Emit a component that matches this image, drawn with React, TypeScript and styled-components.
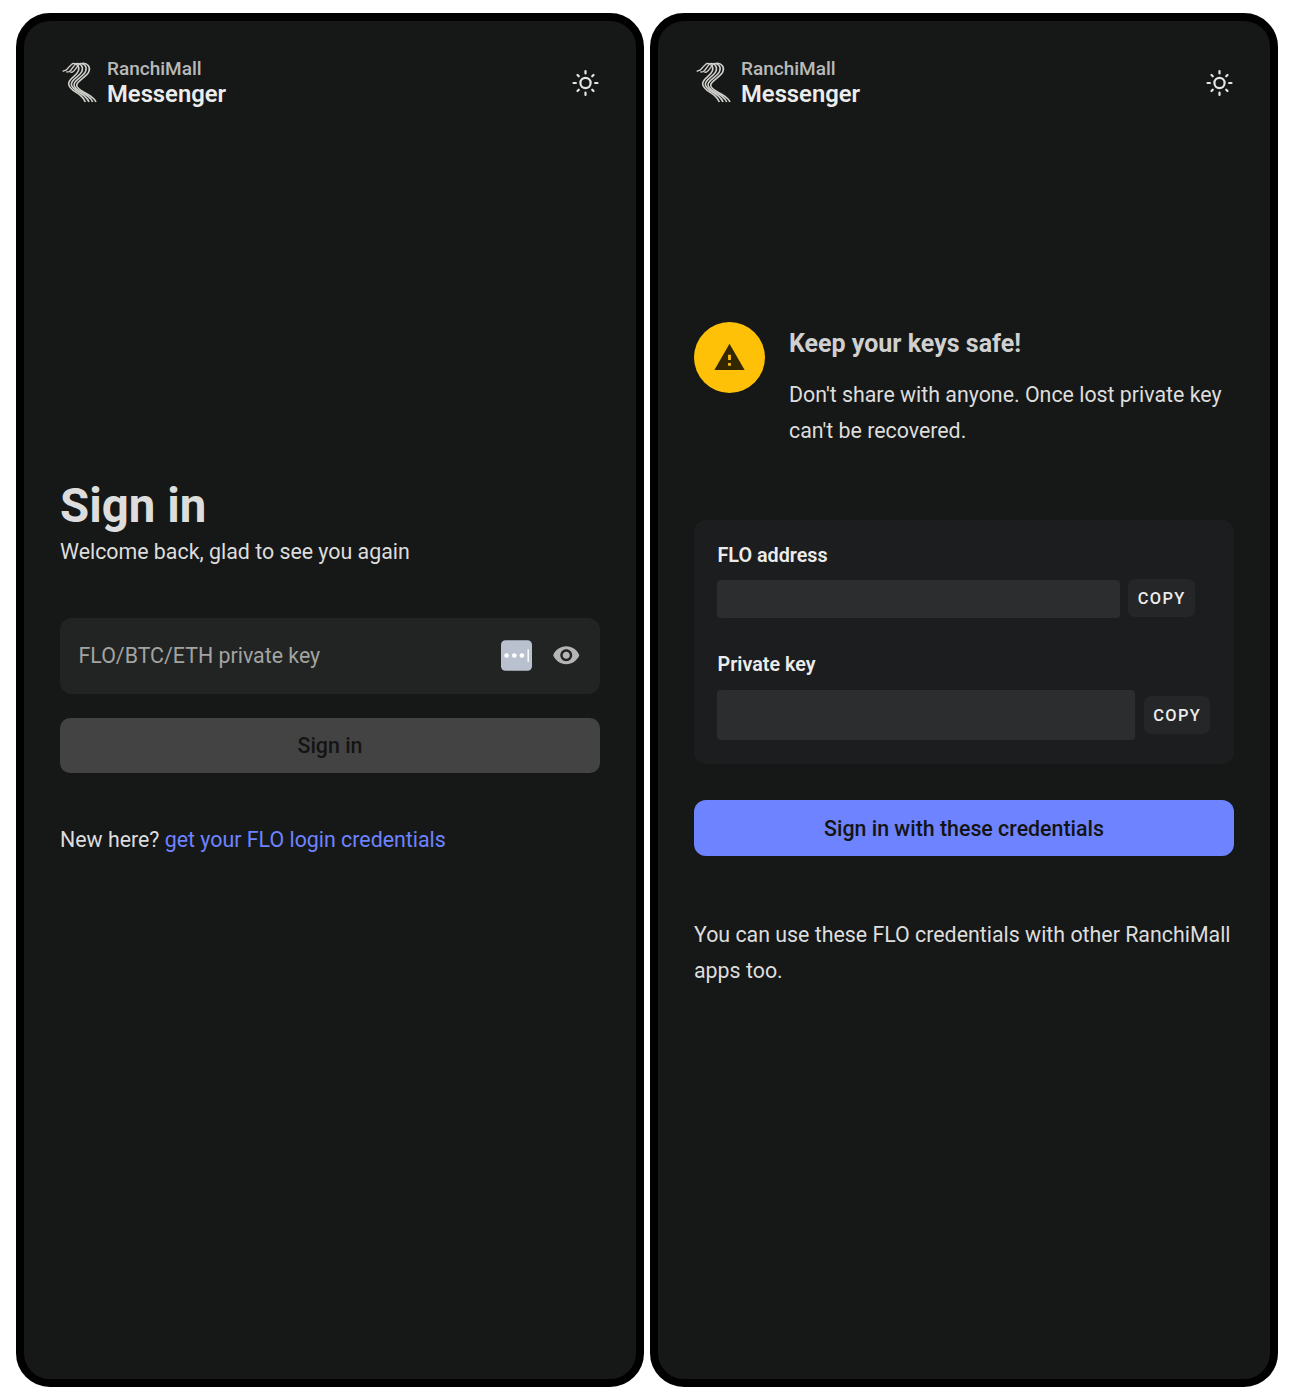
import React from "react";
import styled, { createGlobalStyle } from "styled-components";

const GlobalStyle = createGlobalStyle`
  *, *::before, *::after { box-sizing: border-box; }
  body { margin: 0; background: #fff; font-family: Roboto, "Open Sans", sans-serif; }
  h1, h2, p { margin: 0; }
  button, input { font: inherit; border: 0; }
`;

const Stage = styled.main`
  display: flex;
  gap: 6.5px;
  padding: 13px 16px 13.5px;
  height: 1400px;
`;

const Phone = styled.section`
  width: 627.5px;
  height: 1373.5px;
  flex: none;
  padding: 0 35.5px 0 36px;
  border: 8px solid #000;
  border-radius: 34px;
  background: #161817;
  color: #dddddd;
  display: flex;
  flex-direction: column;
`;

const Header = styled.header`
  display: flex;
  align-items: center;
  margin-top: 34px;
  padding-left: 2px;
  height: 54px;
`;

const Brand = styled.div`
  display: flex;
  flex-direction: column;
  margin-left: 10px;
  flex: 1;
`;

const Company = styled.span`
  font-size: 19px;
  font-weight: 500;
  line-height: 26px;
  color: #b9b9b9;
`;

const Product = styled.span`
  margin-top: -1px;
  margin-bottom: 1px;
  font-size: 23.8px;
  line-height: 26px;
  font-weight: 600;
  color: #ececec;
`;

const Title = styled.h1`
  margin-top: 368.5px;
  margin-bottom: 0.5px;
  font-size: 47.4px;
  line-height: 56px;
  font-weight: 700;
`;

const Copy = styled.p<{ $top?: number }>`
  margin-top: ${(p) => p.$top ?? 0}px;
  font-size: 21.36px;
  line-height: 36px;
`;

const Link = styled.a`
  color: #6e83ff;
  text-decoration: none;
`;

const Field = styled.label`
  display: flex;
  align-items: center;
  flex: none;
  height: 76px;
  margin-top: 47.5px;
  padding: 0 19.5px 0 18.5px;
  border-radius: 12px;
  background: #222423;
`;

const KeyInput = styled.input`
  flex: 1;
  min-width: 0;
  padding: 0;
  outline: 0;
  background: transparent;
  font-size: 21.36px;
  color: #ddd;
  &::placeholder { color: #a2a3a2; opacity: 1; }
`;

const Action = styled.button<{ $primary?: boolean; $top: number }>`
  flex: none;
  width: 100%;
  height: ${(p) => (p.$primary ? 56 : 55)}px;
  margin-top: ${(p) => p.$top}px;
  padding: 0;
  border-radius: ${(p) => (p.$primary ? 12 : 10)}px;
  background: ${(p) => (p.$primary ? "#6e83ff" : "#434343")};
  color: #141414;
  font-size: 21.36px;
  font-weight: 500;
`;

const Notice = styled.div`
  display: flex;
  gap: 24px;
  margin-top: 213px;
`;

const Badge = styled.div`
  display: grid;
  place-items: center;
  flex: none;
  width: 71px;
  height: 71px;
  border-radius: 50%;
  background: #ffc107;
`;

const NoticeTitle = styled.h2`
  margin-top: 5px;
  font-size: 25px;
  line-height: 34px;
  font-weight: 700;
  color: #d0d0d0;
`;

const Card = styled.div`
  flex: none;
  height: 244px;
  margin-top: 71px;
  padding: 23px 22.5px 0;
  border-radius: 12px;
  background: #1c1d1e;
`;

const Label = styled.div`
  padding-left: 1px;
  font-size: 19.75px;
  line-height: 26px;
  font-weight: 600;
  color: #ececec;
`;

const KeyRow = styled.div<{ $gap: number; $top: number; $bottom?: number }>`
  display: flex;
  align-items: center;
  gap: ${(p) => p.$gap}px;
  margin-top: ${(p) => p.$top}px;
  margin-bottom: ${(p) => p.$bottom ?? 0}px;
`;

const KeyValue = styled.div<{ $w: number; $h: number }>`
  width: ${(p) => p.$w}px;
  height: ${(p) => p.$h}px;
  border-radius: 4px;
  background: #2c2d2f;
`;

const CopyButton = styled.button<{ $lift?: number }>`
  width: 66.5px;
  height: 38px;
  margin-bottom: ${(p) => p.$lift ?? 0}px;
  padding: 0 0 0 1px;
  border-radius: 7px;
  background: #252627;
  color: #ececec;
  font-size: 16.4px;
  font-weight: 500;
  letter-spacing: 1.4px;
`;

function Logo() {
  return (
    <svg width="35" height="42" viewBox="20 20 105 126" fill="none">
      <g stroke="#d0d0cc" strokeWidth="4.8">
        <path d="M50 28 C64 25 74 37 69 50 C63 66 40 72 40 88 C40 104 62 112 76 124 C84 131 88 137 90 143" />
        <path d="M61 28 C75 25 85 37 80 50 C74 67 48 74 48 90 C48 105 71 112 86 124 C94 131 99 137 101 143" />
        <path d="M72 28 C86 25 96 37 91 50 C85 68 56 76 56 91 C56 106 81 113 97 125 C105 131 110 137 112 143" />
        <path d="M81 27 C96 25 106 38 101 51 C95 69 64 78 64 93 C64 107 91 114 107 126 C115 132 120 138 122 143" />
        <path d="M51 28 C43 35 37 42 33 47 L22 51" strokeWidth="4" />
        <path d="M62 28 C54 35 48 48 42 52 L33 53" strokeWidth="4" />
        <path d="M73 28 C64 36 60 49 52 53 L45 54" strokeWidth="4" />
      </g>
    </svg>
  );
}

function SunIcon() {
  return (
    <svg
      width="28"
      height="30"
      viewBox="0 -1 28 30"
      fill="none"
      stroke="#e6e6e6"
      strokeWidth="2.2"
      strokeLinecap="round"
    >
      <circle cx="13.5" cy="15" r="5.1" />
      <path d="M13.5 3v2.4M13.5 24.6V27M1.5 15h2.4M23.1 15h2.4M5.5 7l1.3 1.3M20.2 21.7l1.3 1.3M5.5 23l1.3-1.3M20.2 8.3l1.3-1.3" />
    </svg>
  );
}

const ManagerBadge = styled.svg`
  margin-right: 20px;
`;

function ManagerIcon() {
  return (
    <ManagerBadge width="32" height="32" viewBox="0 0 32 32">
      <rect x="1" y=".3" width="31" height="30.4" rx="4.5" fill="#bac1ce" />
      <g fill="#fff">
        <circle cx="6.6" cy="15.5" r="2.3" />
        <circle cx="14.3" cy="15.5" r="2.3" />
        <circle cx="21.9" cy="15.5" r="2.3" />
        <rect x="27.5" y="9.3" width="1.4" height="12.6" />
      </g>
    </ManagerBadge>
  );
}

function EyeIcon() {
  return (
    <svg width="28.5" height="28.5" viewBox="0 0 24 24" fill="#b5b5b5">
      <path d="M12 4.5C7 4.5 2.73 7.61 1 12c1.73 4.39 6 7.5 11 7.5s9.27-3.11 11-7.5c-1.73-4.39-6-7.5-11-7.5zM12 17c-2.76 0-5-2.24-5-5s2.24-5 5-5 5 2.24 5 5-2.24 5-5 5zm0-8c-1.66 0-3 1.34-3 3s1.34 3 3 3 3-1.34 3-3-1.34-3-3-3z" />
    </svg>
  );
}

function WarningIcon() {
  return (
    <svg width="33" height="33" viewBox="0 0 24 24" fill="#332700">
      <path d="M1 21h22L12 2 1 21zm12-3h-2v-2h2v2zm0-4.2h-2V10h2v3.8z" />
    </svg>
  );
}

function AppHeader() {
  return (
    <Header>
      <Logo />
      <Brand>
        <Company>RanchiMall</Company>
        <Product>Messenger</Product>
      </Brand>
      <SunIcon />
    </Header>
  );
}

export default function App() {
  return (
    <>
      <GlobalStyle />
      <Stage>
        <Phone>
          <AppHeader />
          <Title>Sign in</Title>
          <Copy>Welcome back, glad to see you again</Copy>
          <Field>
            <KeyInput placeholder="FLO/BTC/ETH private key" />
            <ManagerIcon />
            <EyeIcon />
          </Field>
          <Action $top={24}>Sign in</Action>
          <Copy $top={49}>
            New here? <Link>get your FLO login credentials</Link>
          </Copy>
        </Phone>
        <Phone>
          <AppHeader />
          <Notice>
            <Badge>
              <WarningIcon />
            </Badge>
            <div>
              <NoticeTitle>Keep your keys safe!</NoticeTitle>
              <Copy $top={16}>
                Don't share with anyone. Once lost private key
                <br />
                can't be recovered.
              </Copy>
            </div>
          </Notice>
          <Card>
            <Label>FLO address</Label>
            <KeyRow $gap={8} $top={10} $bottom={34}>
              <KeyValue $w={403.5} $h={38} />
              <CopyButton $lift={1}>COPY</CopyButton>
            </KeyRow>
            <Label>Private key</Label>
            <KeyRow $gap={8.5} $top={12}>
              <KeyValue $w={418.5} $h={50} />
              <CopyButton>COPY</CopyButton>
            </KeyRow>
          </Card>
          <Action $primary $top={36}>Sign in with these credentials</Action>
          <Copy $top={60.5}>
            You can use these FLO credentials with other RanchiMall
            <br />
            apps too.
          </Copy>
        </Phone>
      </Stage>
    </>
  );
}
